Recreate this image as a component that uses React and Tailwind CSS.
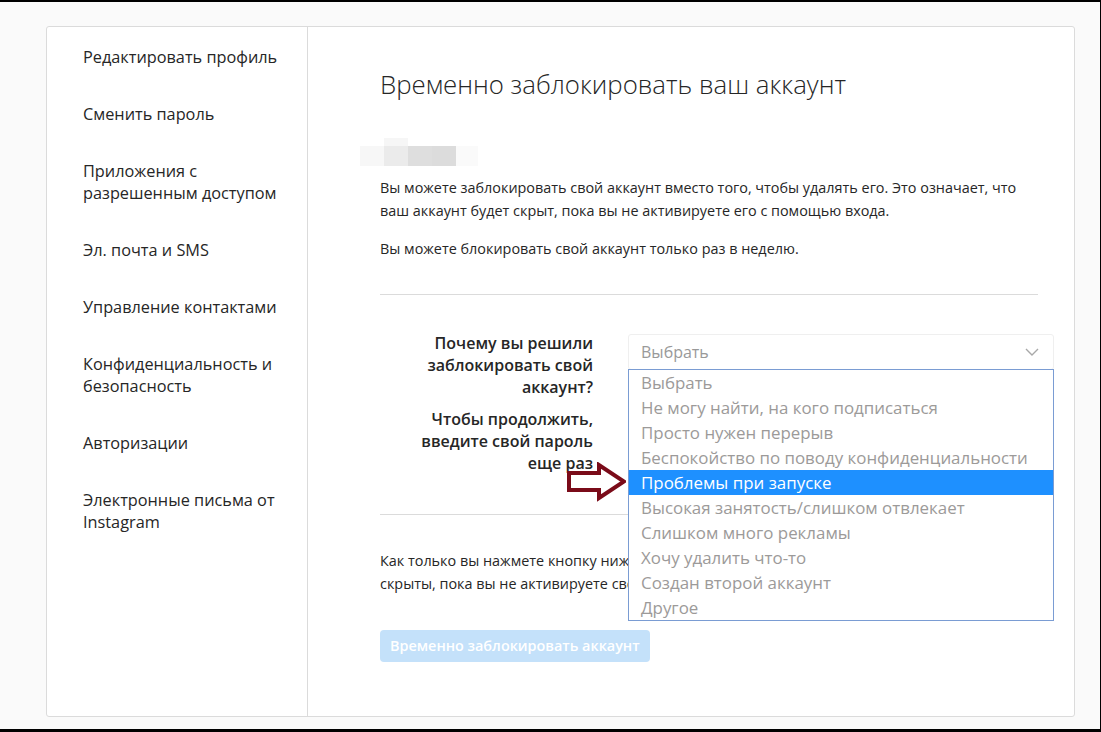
const menu = [
    'Редактировать профиль',
    'Сменить пароль',
    'Приложения с разрешенным доступом',
    'Эл. почта и SMS',
    'Управление контактами',
    'Конфиденциальность и безопасность',
    'Авторизации',
    'Электронные письма от Instagram',
];

const reasons = [
    'Выбрать',
    'Не могу найти, на кого подписаться',
    'Просто нужен перерыв',
    'Беспокойство по поводу конфиденциальности',
    'Проблемы при запуске',
    'Высокая занятость/слишком отвлекает',
    'Слишком много рекламы',
    'Хочу удалить что-то',
    'Создан второй аккаунт',
    'Другое',
];

const App = () => {
    return (
        <div
            className="w-[1101px] h-[732px] bg-[#fafafa] border-t-2 border-r border-b-[3px] border-black pt-[24px] pl-[46px] text-[#262626] overflow-hidden"
            style={{ fontFamily: '"Open Sans", "Noto Sans", sans-serif' }}
        >
            <div className="w-[1029px] h-[691px] bg-white border border-[#dbdbdb] rounded-[3px] flex">
                {/* sidebar */}
                <ul className="w-[261px] shrink-0 border-r border-[#dbdbdb] pt-[1px]">
                    {menu.map((item) => (
                        <li key={item} className="pl-[36px] pr-[20px] py-[17.5px] text-[16.3px] leading-[22px]">
                            {item}
                        </li>
                    ))}
                </ul>

                {/* content */}
                <div className="relative flex-1 min-w-0 pl-[72px] pr-[36px]">
                    <h2 className="mt-[42px] text-[25.8px] leading-[30px] font-light">
                        Временно заблокировать ваш аккаунт
                    </h2>

                    {/* blurred user name */}
                    <div className="mt-[39px] -ml-[20px] flex h-[28px] items-end">
                        <div className="w-[24px] h-[20px] bg-[#f7f7f7]" />
                        <div className="w-[24px] h-[28px] flex flex-col">
                            <div className="h-[8px] bg-[#f6f6f6]" />
                            <div className="flex-1 bg-[#ebebeb]" />
                        </div>
                        <div className="w-[24px] h-[20px] bg-[#dedede]" />
                        <div className="w-[24px] h-[20px] bg-[#dcdcdc]" />
                        <div className="w-[22px] h-[20px] bg-[#fafafa]" />
                    </div>

                    <p className="mt-[10px] text-[14.4px] leading-[23px]">
                        Вы можете заблокировать свой аккаунт вместо того, чтобы удалять его. Это означает, что
                        <br />
                        ваш аккаунт будет скрыт, пока вы не активируете его с помощью входа.
                    </p>
                    <p className="mt-[15px] text-[14.4px] leading-[23px]">
                        Вы можете блокировать свой аккаунт только раз в неделю.
                    </p>

                    <div className="mt-[34px] h-px bg-[#dbdbdb]" />

                    <div className="mt-[37px] flex gap-[35px]">
                        <div className="w-[213px] shrink-0 text-right text-[16px] leading-[22px] font-semibold">
                            <div>
                                Почему вы решили
                                <br />
                                заблокировать свой
                                <br />
                                аккаунт?
                            </div>
                            <div className="mt-[10px]">
                                Чтобы продолжить,
                                <br />
                                введите свой пароль
                                <br />
                                еще раз
                            </div>
                        </div>

                        <div className="relative mt-[2px] w-[426px] shrink-0 h-[36px]">
                            <div className="h-full border border-[#efefef] rounded-[3px] flex items-center justify-between pl-[12px] pr-[14px] text-[16px] text-[#999]">
                                <span>Выбрать</span>
                                <svg width="14" height="8" viewBox="0 0 14 8" fill="none" stroke="#a8a8a8" strokeWidth="1.4">
                                    <polyline points="1,1 7,7 13,1" />
                                </svg>
                            </div>

                            <ul className="absolute left-0 top-[35px] w-[426px] bg-white border border-[#7a9cd3] z-10">
                                {reasons.map((r, i) => (
                                    <li
                                        key={r}
                                        className={
                                            i === 4
                                                ? 'h-[25px] pl-[12px] text-[16.9px] leading-[25px] bg-[#1e90ff] text-white'
                                                : 'h-[25px] pl-[12px] text-[16.9px] leading-[25px] text-[#9c9a99]'
                                        }
                                    >
                                        {r}
                                    </li>
                                ))}
                            </ul>
                        </div>
                    </div>

                    <div className="mt-[40px] h-px bg-[#dbdbdb]" />

                    {/* the open dropdown covers the rest of this text */}
                    <p className="mt-[34px] text-[14.4px] leading-[23px] whitespace-nowrap">
                        Как только вы нажмете кнопку ниже, ваши фото, комментарии и отметки «Нравится» будут
                        <br />
                        скрыты, пока вы не активируете свой аккаунт, снова выполнив вход.
                    </p>

                    <button className="mt-[35px] h-[32px] px-[10px] rounded-[4px] bg-[#c4e1fa] text-white text-[14.4px] font-semibold">
                        Временно заблокировать аккаунт
                    </button>

                    {/* red arrow pointing to the selected option */}
                    <svg className="absolute left-[258px] top-[435px] z-20" width="60" height="40" viewBox="0 0 60 40">
                        <polygon
                            points="3,11 33,11 33,3 58,19.5 33,36 33,28 3,28"
                            fill="white"
                            stroke="#7a0b19"
                            strokeWidth="4"
                            strokeLinejoin="miter"
                        />
                    </svg>
                </div>
            </div>
        </div>
    );
};

export default App;
